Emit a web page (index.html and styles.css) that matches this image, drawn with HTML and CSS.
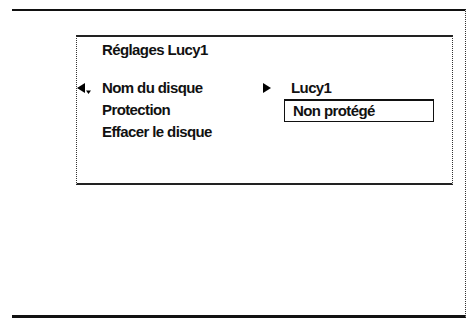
FILE: index.html
```html
<!DOCTYPE html>
<html lang="fr">
<head>
<meta charset="utf-8">
<title>Réglages Lucy1</title>
<link rel="stylesheet" href="styles.css">
</head>
<body>
<div class="screen">
  <div class="panel">
    <div class="title">Réglages Lucy1</div>
    <div class="menu">
      <div class="cursor">
        <svg class="cur-icon" width="15" height="12" viewBox="0 0 15 12"><polygon points="0,5 8,0 8,10" fill="#000"/><polygon points="9,7.5 14,7.5 11.5,11" fill="#000"/></svg>
      </div>
      <div class="label">Nom du disque</div>
      <div class="go">
        <svg class="go-icon" width="8" height="10" viewBox="0 0 8 10"><polygon points="0,0 8,5 0,10" fill="#000"/></svg>
      </div>
      <div class="value">Lucy1</div>

      <div class="cursor"></div>
      <div class="label">Protection</div>
      <div class="go"></div>
      <div class="value boxed">Non protégé</div>

      <div class="cursor"></div>
      <div class="label">Effacer le disque</div>
      <div class="go"></div>
      <div class="value"></div>
    </div>
  </div>
</div>
</body>
</html>
```

FILE: styles.css
```css
html, body {
  margin: 0;
  padding: 0;
  background: #fff;
}
body {
  width: 470px;
  height: 320px;
  overflow: hidden;
  font-family: "Liberation Sans", Arial, sans-serif;
  font-weight: bold;
  font-size: 15px;
  letter-spacing: -0.6px;
  color: #111;
}
.screen {
  margin: 9px 0 0 12px;
  width: 453px;
  height: 304px;
  border-top: 2px solid #111;
  border-right: 1px dotted #333;
  border-bottom: 3px solid #111;
}
.panel {
  margin: 24px 0 0 64px;
  width: 375px;
  height: 146px;
  border-top: 2px solid #222;
  border-left: 1px dotted #333;
  border-right: 1px dotted #333;
  border-bottom: 2px solid #222;
}
.title {
  height: 22px;
  line-height: 22px;
  margin-top: 2px;
  padding-left: 25px;
}
.menu {
  margin-top: 16px;
  display: grid;
  grid-template-columns: 25px 161px 21px 150px;
  grid-auto-rows: 22px;
  align-items: center;
}
.cursor, .go {
  display: flex;
  align-items: center;
  height: 22px;
}
.cur-icon, .go-icon {
  display: block;
  flex: 0 0 auto;
}
.cur-icon {
  width: 15px;
  height: 12px;
  margin-top: 1px;
}
.go-icon {
  width: 8px;
  height: 10px;
}
.label, .value {
  line-height: 22px;
}
.value {
  padding-left: 7px;
}
.value.boxed {
  height: 23px;
  box-sizing: border-box;
  border: 1px solid #111;
  border-top-width: 2px;
  line-height: 20px;
  padding-left: 8px;
}
```
